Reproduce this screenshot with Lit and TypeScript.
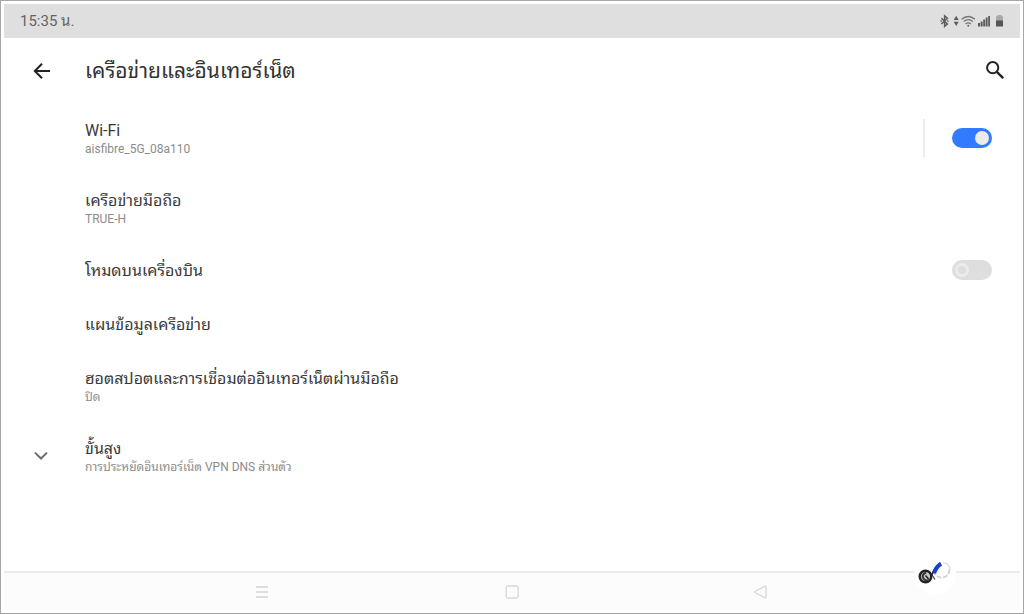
import { LitElement, html, css, svg, nothing } from "lit";
import { customElement, property } from "lit/decorators.js";

@customElement("status-bar")
class StatusBar extends LitElement {
  static styles = css`
    :host {
      display: flex;
      align-items: center;
      justify-content: space-between;
      height: 34px;
      padding: 0 15px 0 16px;
      background: #dfdfdf;
      color: #636363;
      font-size: 15px;
      line-height: 20px;
    }
    .icons {
      display: block;
    }
  `;

  render() {
    return html`
      <time datetime="15:35">15:35 น.</time>
      <svg class="icons" width="66" height="16" viewBox="0 0 66 16" role="img" aria-label="Bluetooth, Wi-Fi, signal, battery">
        <path d="M2.4 5.2 8.4 11 5.6 13.4V2.8L8.4 5.2 2.4 11" fill="none" stroke="#5c5c5c" stroke-width="1.5" />
        <path d="M1.4 8.1h1.6M8 8.1h1.6" stroke="#777" stroke-width="1.5" />
        <path d="M14.7 7h5L17.2 2.8zM14.7 8.8h5l-2.5 4.2z" fill="#5c5c5c" />
        <g fill="none" stroke="#747474" stroke-width="1.3">
          <path d="M22.6 6.2Q29.3 0.8 36 6.2" />
          <path d="M24.7 8.6Q29.3 4.8 33.9 8.6" />
          <path d="M26.7 11Q29.3 8.8 31.9 11" />
        </g>
        <circle cx="29.3" cy="12.7" r="1" fill="#666" />
        <path d="M39 10h2v3.5h-2zM41.6 8.5h2v5h-2zM44.2 6.5h2v7h-2zM46.8 4.5h1.8v9h-1.8zM49.2 3h1.8v10.5h-1.8z" fill="#5c5c5c" />
        <path d="M58.5 2h4v1.2H64V8h-7V3.2h1.5z" fill="#a9a9a9" />
        <path d="M57 7.5h7v6h-7z" fill="#555" />
      </svg>
    `;
  }
}

@customElement("setting-row")
class SettingRow extends LitElement {
  @property() heading = "";
  @property() summary = "";
  @property() control: "" | "on" | "off" = "";
  @property({ type: Boolean }) divided = false;
  @property({ type: Boolean }) expandable = false;

  static styles = css`
    :host {
      display: block;
    }
    .row {
      display: grid;
      grid-template-columns: 81px 1fr auto;
      align-items: center;
      min-height: 54px;
      padding-right: 28px;
    }
    .row.double {
      min-height: 70px;
    }
    .lead {
      padding-left: 29px;
    }
    .lead svg,
    .toggle {
      display: block;
    }
    .text {
      display: flex;
      flex-direction: column;
      padding-top: 2px;
      color: inherit;
      text-decoration: none;
    }
    .heading {
      font-size: 16px;
      line-height: 20px;
      color: #3a3a3a;
    }
    .summary {
      font-size: 12px;
      line-height: 16px;
      color: #8c8c8c;
    }
    .end {
      display: flex;
      align-items: center;
    }
    .divided {
      height: 38px;
      padding-left: 27px;
      border-left: 2px solid #ededed;
    }
    .toggle {
      appearance: none;
      box-sizing: border-box;
      width: 40px;
      height: 20px;
      margin: 0;
      padding: 3px;
      border-radius: 10px;
      background: #dedede;
    }
    .toggle::before {
      content: "";
      display: block;
      box-sizing: border-box;
      width: 14px;
      height: 14px;
      border: 3px solid #ebebeb;
      border-radius: 50%;
      background: #dedede;
    }
    .toggle:checked {
      background: #327aff;
    }
    .toggle:checked::before {
      margin-left: auto;
      background: #ebebeb;
    }
  `;

  render() {
    return html`
      <div class="row ${this.summary ? "double" : ""}">
        <div class="lead">
          ${this.expandable
            ? html`<svg width="16" height="16" viewBox="0 0 16 16" aria-hidden="true">
                ${svg`<path d="M2 4.6 8 10.5l6-5.9" fill="none" stroke="#6b6b6b" stroke-width="2" />`}
              </svg>`
            : nothing}
        </div>
        <a class="text" href="#">
          <span class="heading" id="heading">${this.heading}</span>
          ${this.summary ? html`<span class="summary">${this.summary}</span>` : nothing}
        </a>
        ${this.control
          ? html`<div class="end ${this.divided ? "divided" : ""}">
              <input class="toggle" type="checkbox" role="switch" aria-labelledby="heading" ?checked=${this.control === "on"} />
            </div>`
          : nothing}
      </div>
    `;
  }
}

@customElement("nav-bar")
class NavBar extends LitElement {
  static styles = css`
    :host {
      display: block;
      position: relative;
    }
    .bar {
      display: flex;
      justify-content: center;
      align-items: center;
      gap: 233px;
      height: 37px;
      border-top: 2px solid #ebebeb;
      background: #fcfcfc;
    }
    button {
      padding: 0;
      border: 0;
      background: none;
    }
    svg {
      display: block;
    }
    .mark {
      position: absolute;
      right: 64px;
      bottom: 15px;
    }
  `;

  render() {
    return html`
      <nav class="bar">
        <button aria-label="เมนู">
          <svg width="16" height="16" viewBox="0 0 16 16">
            <path d="M1 3h12M1 8h12M1 13h12" stroke="#dedede" stroke-width="1.8" />
          </svg>
        </button>
        <button aria-label="หน้าหลัก">
          <svg width="16" height="16" viewBox="0 0 16 16">
            <rect x="2.2" y="2" width="12" height="12" rx="1.5" fill="none" stroke="#d8d8d8" stroke-width="1.3" />
          </svg>
        </button>
        <button aria-label="กลับ">
          <svg width="16" height="16" viewBox="0 0 16 16">
            <path d="M12 2.2Q13 2 13 3v10q0 1-1 .8L2.4 8.8Q1.4 8 2.4 7.2z" fill="none" stroke="#d8d8d8" stroke-width="1.3" />
          </svg>
        </button>
      </nav>
      <svg class="mark" width="42" height="42" viewBox="0 0 42 42" aria-hidden="true">
        <circle cx="21" cy="21" r="21" fill="#fff" />
        <circle cx="11.5" cy="23.5" r="5.8" fill="#c9c9c9" stroke="#222" stroke-width="2.4" />
        <path d="M12 19.5q-5 2.500-2.500 6t6.500 1" fill="none" stroke="#333" stroke-width="2" />
        <path d="M11.500 22.500 14.500 26" stroke="#222" stroke-width="1.600" />
        <path d="M17 21.500q3 2 4 5" fill="none" stroke="#555" stroke-width="1.400" />
        <path d="M17.500 23Q20 14 26.500 9.800" fill="none" stroke="#202020" stroke-width="1.600" />
        <path d="M20 20.500Q22 14 27 10.800" fill="none" stroke="#1740d0" stroke-width="4" />
        <path d="M29 9.500q7 1 6.500 7" fill="none" stroke="#dfe1ea" stroke-width="1.400" />
        <path d="M35.500 16q0 6.500-6 8.500-5 1-8.500-3.500" fill="none" stroke="#d4d4d4" stroke-width="2" stroke-dasharray="5 1.500" />
      </svg>
    `;
  }
}

@customElement("app-root")
class AppRoot extends LitElement {
  static styles = css`
    :host {
      display: flex;
      flex-direction: column;
      box-sizing: border-box;
      min-height: 100vh;
      padding: 3px;
      border: 1px solid #a6a6a6;
      background: #fff;
      font-family: Roboto, "Noto Sans Thai Looped", "Noto Sans Thai", sans-serif;
    }
    header {
      display: grid;
      grid-template-columns: 81px 1fr auto;
      align-items: center;
      height: 65px;
      padding-right: 13px;
    }
    h1 {
      margin: 0;
      font-size: 21px;
      font-weight: 400;
      line-height: 28px;
      color: #333;
    }
    button {
      padding: 0;
      border: 0;
      background: none;
    }
    .back {
      justify-self: start;
      margin-left: 26px;
    }
    svg {
      display: block;
    }
    main {
      flex: 1;
    }
  `;

  render() {
    return html`
      <status-bar></status-bar>
      <header>
        <button class="back" aria-label="กลับ">
          <svg width="24" height="24" viewBox="0 0 24 24">
            <path d="M20 12H5.500M12 4.800 4.800 12l7.200 7.200" fill="none" stroke="#222" stroke-width="2" />
          </svg>
        </button>
        <h1>เครือข่ายและอินเทอร์เน็ต</h1>
        <button aria-label="ค้นหา">
          <svg width="24" height="24" viewBox="0 0 24 24">
            <circle cx="9.700" cy="8.700" r="5.600" fill="none" stroke="#222" stroke-width="2" />
            <path d="M13.800 12.800 20.200 19.200" fill="none" stroke="#222" stroke-width="2.400" />
          </svg>
        </button>
      </header>
      <main>
        <setting-row heading="Wi-Fi" summary="aisfibre_5G_08a110" control="on" divided></setting-row>
        <setting-row heading="เครือข่ายมือถือ" summary="TRUE-H"></setting-row>
        <setting-row heading="โหมดบนเครื่องบิน" control="off"></setting-row>
        <setting-row heading="แผนข้อมูลเครือข่าย"></setting-row>
        <setting-row heading="ฮอตสปอตและการเชื่อมต่ออินเทอร์เน็ตผ่านมือถือ" summary="ปิด"></setting-row>
        <setting-row heading="ขั้นสูง" summary="การประหยัดอินเทอร์เน็ต VPN DNS ส่วนตัว" expandable></setting-row>
      </main>
      <nav-bar></nav-bar>
    `;
  }
}
